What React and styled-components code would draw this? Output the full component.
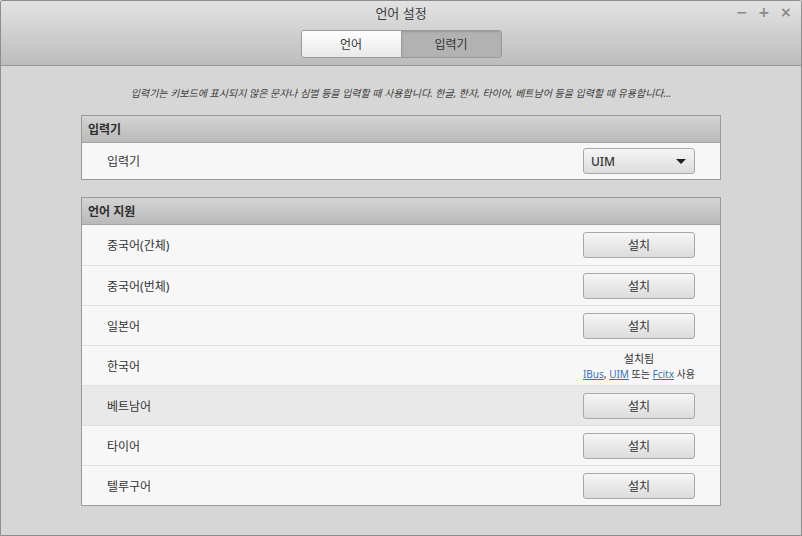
import React from 'react';
import styled, { createGlobalStyle } from "styled-components";

const GlobalStyle = createGlobalStyle`
  html, body { margin: 0; padding: 0; background: #d6d6d6; }
  body { font-family: "Noto Sans", "Noto Sans CJK KR", sans-serif; }
`;

const languages = [
  { name: "중국어(간체)" },
  { name: "중국어(번체)" },
  { name: "일본어" },
  { name: "한국어", installed: true },
  { name: "베트남어", hover: true },
  { name: "타이어" },
  { name: "텔루구어" },
];

function App() {
  return (
    <>
      <GlobalStyle />
      <Window>
        <TitleBar>
          <Title>언어 설정</Title>
          <Controls>
            <span>−</span>
            <span>+</span>
            <span>×</span>
          </Controls>
          <Tabs>
            <Tab>언어</Tab>
            <Tab $active>입력기</Tab>
          </Tabs>
        </TitleBar>

        <Body>
          <Description>
            입력기는 키보드에 표시되지 않은 문자나 심벌 등을 입력할 때 사용합니다. 한글, 한자, 타이어, 베트남어 등을 입력할 때 유용합니다...
          </Description>

          <Section>
            <SectionHeader>입력기</SectionHeader>
            <Row $height={36}>
              <Label>입력기</Label>
              <Combo>
                <span>UIM</span>
                <Caret />
              </Combo>
            </Row>
          </Section>

          <Section>
            <SectionHeader>언어 지원</SectionHeader>
            {languages.map((l) => (
              <Row key={l.name} $height={40} $hover={l.hover} $divided>
                <Label>{l.name}</Label>
                {l.installed ? (
                  <Installed>
                    <div>설치됨</div>
                    <Small>
                      <a href="#">IBus</a>, <a href="#">UIM</a> 또는 <a href="#">Fcitx</a> 사용
                    </Small>
                  </Installed>
                ) : (
                  <Button>설치</Button>
                )}
              </Row>
            ))}
          </Section>
        </Body>
      </Window>
    </>
  );
}

const Window = styled.div`
  width: 802px;
  height: 536px;
  box-sizing: border-box;
  border: 1px solid #8e8e8e;
  border-radius: 3px 3px 0 0;
  background: #d6d6d6;
  display: flex;
  flex-direction: column;
  overflow: hidden;
  color: #333;
`;

const TitleBar = styled.div`
  position: relative;
  height: 65px;
  flex: none;
  box-sizing: border-box;
  border-bottom: 1px solid #999;
  background: linear-gradient(#e3e3e3, #bcbcbc);
  display: flex;
  flex-direction: column;
  align-items: center;
`;

const Title = styled.div`
  font-size: 13px;
  line-height: 18px;
  margin-top: 3px;
  color: #3c3c3c;
`;

const Controls = styled.div`
  position: absolute;
  right: 11px;
  top: 3px;
  display: flex;
  gap: 12px;
  font-family: "DejaVu Sans", sans-serif;
  font-size: 14px;
  font-weight: bold;
  color: #8a8a8a;
  span { width: 10px; text-align: center; }
`;

const Tabs = styled.div`
  margin-top: 8px;
  display: flex;
  border: 1px solid #9a9a9a;
  border-radius: 3px;
  overflow: hidden;
`;

const Tab = styled.div`
  width: 99px;
  height: 26px;
  display: flex;
  align-items: center;
  justify-content: center;
  font-size: 12px;
  color: #333;
  background: ${(p) => (p.$active ? "#b2b2b2" : "linear-gradient(#ffffff, #e8e8e8)")};
  box-shadow: ${(p) => (p.$active ? "inset 0 1px 2px rgba(0,0,0,0.15)" : "none")};
  & + & { border-left: 1px solid #9a9a9a; }
`;

const Body = styled.div`
  flex: 1;
  padding: 0 80px;
  display: flex;
  flex-direction: column;
`;

const Description = styled.div`
  margin: 20px 0 15px;
  text-align: center;
  font-size: 10px;
  font-style: italic;
  line-height: 14px;
  color: #3a3a3a;
  white-space: nowrap;
`;

const Section = styled.div`
  border: 1px solid #9a9a9a;
  background: #f7f7f7;
  margin-bottom: 17px;
`;

const SectionHeader = styled.div`
  height: 27px;
  box-sizing: border-box;
  border-bottom: 1px solid #a3a3a3;
  background: linear-gradient(#d4d4d4, #b9b9b9);
  font-size: 12px;
  font-weight: bold;
  color: #2e2e2e;
  display: flex;
  align-items: center;
  padding-left: 6px;
`;

const Row = styled.div`
  height: ${(p) => p.$height}px;
  box-sizing: border-box;
  display: flex;
  align-items: center;
  justify-content: space-between;
  padding: 0 25px 0 25px;
  background: ${(p) => (p.$hover ? "#e9e9e9" : "#f7f7f7")};
  ${(p) => p.$divided && `& + & { border-top: 1px solid #e0e0e0; }`}
`;

const Label = styled.div`
  font-size: 12px;
  color: #333;
`;

const Button = styled.div`
  width: 112px;
  height: 26px;
  box-sizing: border-box;
  border: 1px solid #a8a8a8;
  border-radius: 3px;
  background: linear-gradient(#f6f6f6, #dcdcdc);
  display: flex;
  align-items: center;
  justify-content: center;
  font-size: 12px;
  color: #333;
`;

const Combo = styled(Button)`
  justify-content: space-between;
  padding: 0 8px 0 7px;
  font-size: 12px;
  font-weight: 500;
  color: #333;
`;

const Caret = styled.div`
  width: 0;
  height: 0;
  border-left: 5px solid transparent;
  border-right: 5px solid transparent;
  border-top: 5px solid #222;
`;

const Installed = styled.div`
  width: 112px;
  display: flex;
  flex-direction: column;
  align-items: center;
  font-size: 11px;
  line-height: 16px;
  color: #333;
  white-space: nowrap;
  margin-top: 2px;
`;

const Small = styled.div`
  font-size: 10px;
  line-height: 15px;
  a { color: #3572c4; text-decoration: underline; }
`;

export default App;
